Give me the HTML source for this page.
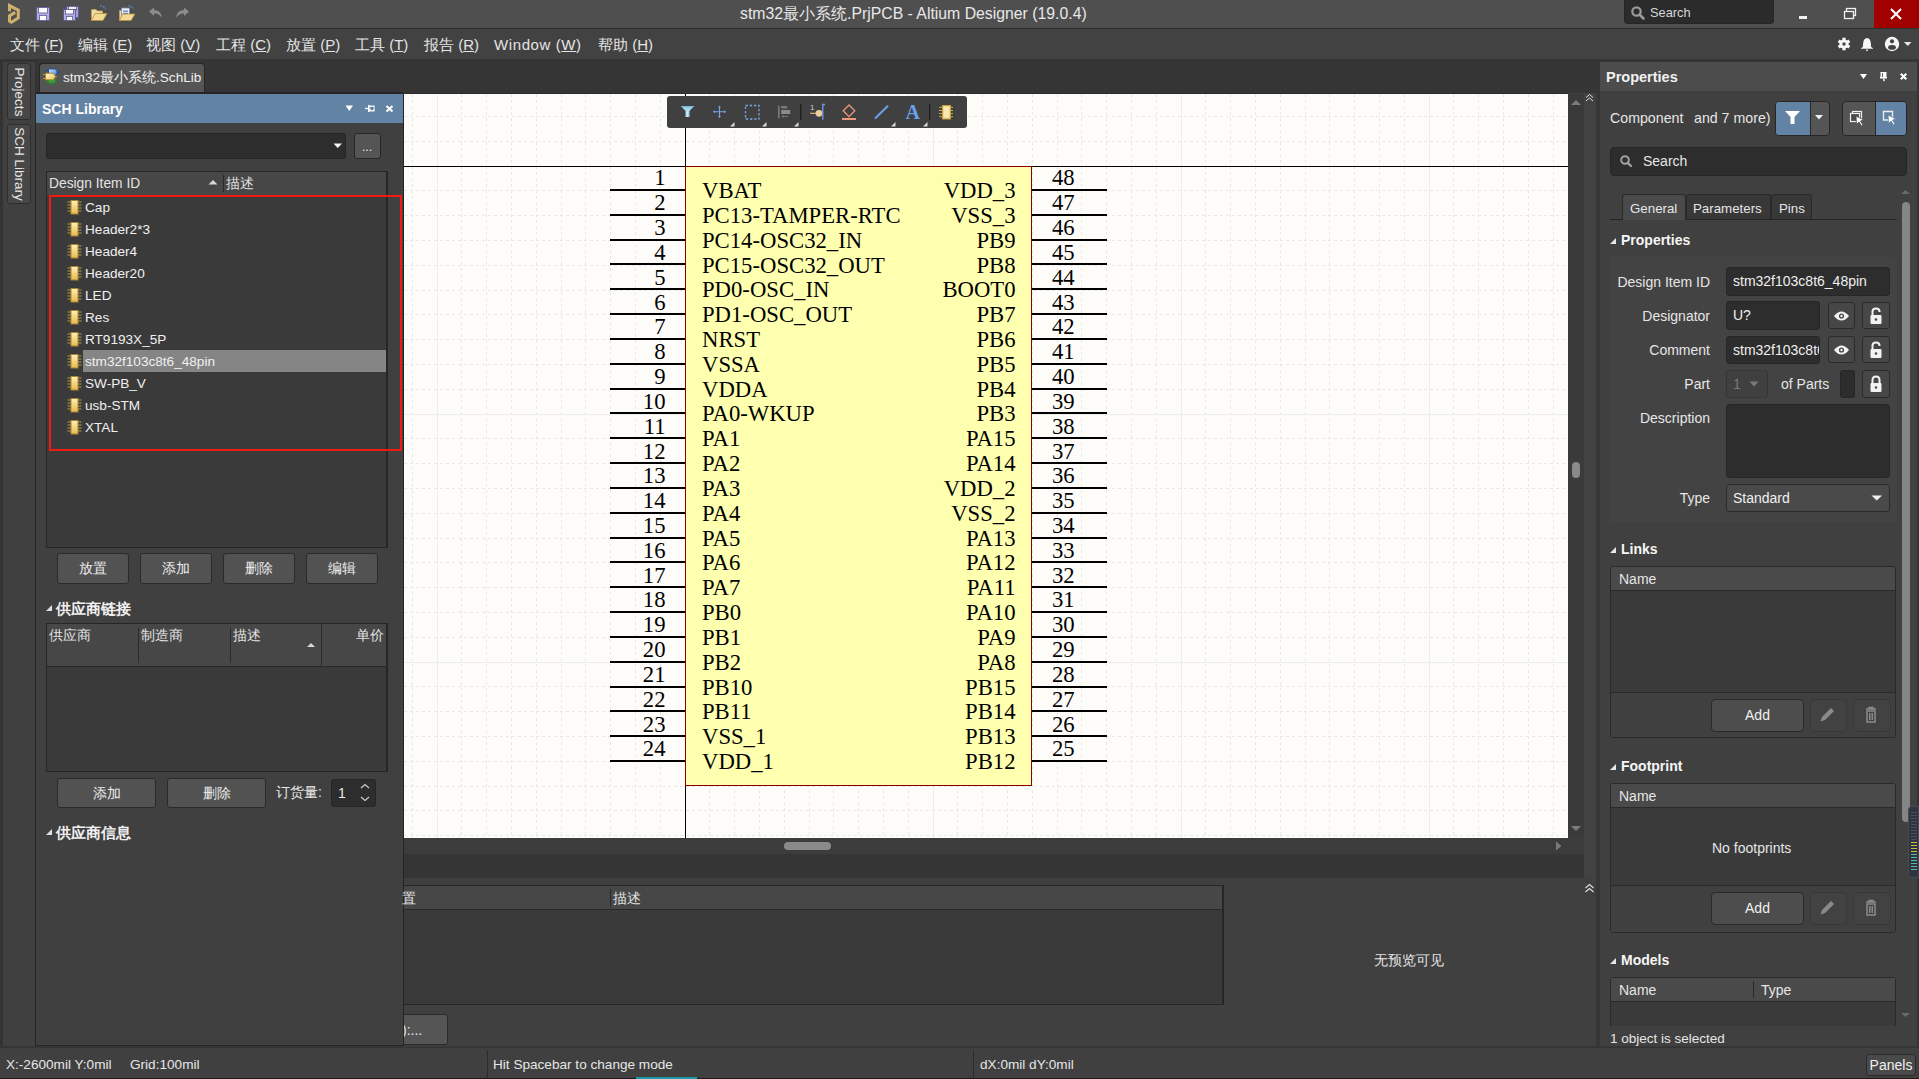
<!DOCTYPE html><html><head><meta charset="utf-8"><title>Altium</title><style>
*{margin:0;padding:0;box-sizing:border-box}
html,body{width:1919px;height:1079px;overflow:hidden;background:#333333;font-family:"Liberation Sans",sans-serif;color:#e6e6e6}
.a{position:absolute}
.t{position:absolute;white-space:nowrap;line-height:1}
.sv{position:absolute;overflow:visible}
</style></head><body>
<div style="position:absolute;left:0px;top:0px;width:1919px;height:28px;background:#4f4f4f"></div>
<div style="position:absolute;left:0px;top:28px;width:1919px;height:1px;background:#2e2e2e"></div>
<svg class="sv" style="left:0;top:0" width="200" height="28"><polyline points="9.5,11.2 9.5,5.6 18.3,10.2 18.3,17.9 11.4,22.3 9.5,21.1 9.5,15.9 15.2,12.4" stroke="#cdb06a" stroke-width="3" fill="none" stroke-linejoin="miter"/><rect x="36.5" y="7.5" width="13" height="13" fill="#b4aee8" stroke="#5c5c94" stroke-width="1"/><rect x="38.5" y="7.5" width="9" height="5.5" fill="#fafafa" stroke="#5c5c94" stroke-width="0.8"/><rect x="39.5" y="15.5" width="7" height="5" fill="#fafafa" stroke="#5c5c94" stroke-width="0.8"/><rect x="66.5" y="6.5" width="12" height="11" fill="#a8a2e0" stroke="#5c5c94" stroke-width="1"/><rect x="68.5" y="6.5" width="8" height="3.5" fill="#f2f2f2" stroke="#5c5c94" stroke-width="0.8"/><rect x="63.5" y="9.5" width="12" height="11" fill="#b4aee8" stroke="#5c5c94" stroke-width="1"/><rect x="65.5" y="9.5" width="8" height="4.5" fill="#fafafa" stroke="#5c5c94" stroke-width="0.8"/><rect x="66.5" y="16.5" width="6" height="4" fill="#fafafa" stroke="#5c5c94" stroke-width="0.8"/><path d="M91.5 9.5 L96 9.5 L97.5 11 L102.5 11 L102.5 13.5 L91.5 20.5 Z" fill="#f0dca8" stroke="#c0a050" stroke-width="0.8"/><path d="M95 13.5 L107 13.5 L103 20.5 L91.5 20.5 Z" fill="#f3d996" stroke="#b89038" stroke-width="0.8"/><path d="M100 6 Q104 5.5 105.5 9.5" stroke="#5a8ec8" stroke-width="1.1" stroke-dasharray="2 1" fill="none"/><path d="M119.5 10.5 L122 10.5 L122 20.5 L119.5 20.5 Z" fill="#f0dca8" stroke="#c0a050" stroke-width="0.8"/><rect x="121.5" y="8" width="8" height="10" fill="#eef2f8" stroke="#6a88b8" stroke-width="0.8"/><rect x="123" y="10.5" width="5" height="1.2" fill="#5a7ab0"/><rect x="123" y="12.8" width="5" height="1.2" fill="#5a7ab0"/><path d="M122.5 14 L135 14 L131 20.5 L119.5 20.5 Z" fill="#f3d996" stroke="#b89038" stroke-width="0.8"/><path d="M128.5 6 Q132 5.5 133.5 9.5" stroke="#5a8ec8" stroke-width="1.1" stroke-dasharray="2 1" fill="none"/><path d="M149 11.5 L154 7.5 L154 10 Q161 10 162 18 Q159 13 154 13.5 L154 16 Z" fill="#8c8c8c"/><path d="M189 11.5 L184 7.5 L184 10 Q177 10 176 18 Q179 13 184 13.5 L184 16 Z" fill="#8c8c8c"/></svg>
<div class="t" style="left:740px;top:4px;font-size:15.8px;color:#e8e8e8;line-height:20px">stm32最小系统.PrjPCB - Altium Designer (19.0.4)</div>
<div style="position:absolute;left:1624px;top:0px;width:150px;height:24px;background:#2b2b2b;border-radius:0 0 4px 4px;border:1px solid #262626;border-top:none"></div>
<svg class="sv" style="left:1630;top:5px" width="16" height="16"><circle cx="6.5" cy="6.5" r="4.2" stroke="#9a9a9a" stroke-width="2.2" fill="none"/><path d="M9.5 9.5 L13.5 13.5" stroke="#9a9a9a" stroke-width="2.6" stroke-linecap="round"/></svg>
<div class="t" style="left:1650px;top:5px;font-size:12.8px;color:#d8d8d8;line-height:16px">Search</div>
<div style="position:absolute;left:1799px;top:16px;width:8px;height:3px;background:#f0f0f0"></div>
<svg class="sv" style="left:1842px;top:6px" width="16" height="16"><rect x="4.5" y="2.5" width="9" height="7" stroke="#f0f0f0" stroke-width="1.3" fill="none"/><rect x="2.5" y="5.5" width="9" height="7" stroke="#f0f0f0" stroke-width="1.3" fill="#4f4f4f"/></svg>
<div style="position:absolute;left:1874px;top:0px;width:45px;height:28px;background:#a00000"></div>
<svg class="sv" style="left:1889px;top:7px" width="14" height="14"><path d="M2 2 L12 12 M12 2 L2 12" stroke="#fff" stroke-width="2"/></svg>
<div style="position:absolute;left:0px;top:29px;width:1919px;height:30px;background:#424242"></div>
<div class="t" style="left:10px;top:35px;font-size:15px;color:#e4e4e4;line-height:19px;">文件 (<u>F</u>)</div>
<div class="t" style="left:78px;top:35px;font-size:15px;color:#e4e4e4;line-height:19px;">编辑 (<u>E</u>)</div>
<div class="t" style="left:146px;top:35px;font-size:15px;color:#e4e4e4;line-height:19px;">视图 (<u>V</u>)</div>
<div class="t" style="left:216px;top:35px;font-size:15px;color:#e4e4e4;line-height:19px;">工程 (<u>C</u>)</div>
<div class="t" style="left:286px;top:35px;font-size:15px;color:#e4e4e4;line-height:19px;">放置 (<u>P</u>)</div>
<div class="t" style="left:355px;top:35px;font-size:15px;color:#e4e4e4;line-height:19px;">工具 (<u>T</u>)</div>
<div class="t" style="left:424px;top:35px;font-size:15px;color:#e4e4e4;line-height:19px;">报告 (<u>R</u>)</div>
<div class="t" style="left:494px;top:35px;font-size:15px;color:#e4e4e4;line-height:19px;letter-spacing:0.6px;">Window (<u>W</u>)</div>
<div class="t" style="left:598px;top:35px;font-size:15px;color:#e4e4e4;line-height:19px;">帮助 (<u>H</u>)</div>
<svg class="sv" style="left:1832px;top:34px" width="87" height="22"><g transform="translate(12,10)" fill="#f6f6f6"><circle r="4.6"/><rect x="-1.6" y="-6.3" width="3.2" height="3" transform="rotate(0)"/><rect x="-1.6" y="-6.3" width="3.2" height="3" transform="rotate(60)"/><rect x="-1.6" y="-6.3" width="3.2" height="3" transform="rotate(120)"/><rect x="-1.6" y="-6.3" width="3.2" height="3" transform="rotate(180)"/><rect x="-1.6" y="-6.3" width="3.2" height="3" transform="rotate(240)"/><rect x="-1.6" y="-6.3" width="3.2" height="3" transform="rotate(300)"/><circle r="1.7" fill="#424242"/></g><path d="M35 4 Q38.5 4.3 38.8 9 L39.2 13 L41 14.2 V14.8 H29 V14.2 L30.8 13 L31.2 9 Q31.5 4.3 35 4 Z" fill="#f6f6f6"/><rect x="34" y="15.6" width="2" height="1.2" fill="#f6f6f6"/><circle cx="60" cy="10" r="7.2" fill="#f6f6f6"/><circle cx="60" cy="7.3" r="2.1" fill="#424242"/><ellipse cx="60" cy="13.4" rx="3.9" ry="2.3" fill="#424242"/><path d="M72 8 L79.5 8 L75.75 12 Z" fill="#e8e8e8"/></svg>
<div style="position:absolute;left:0px;top:59px;width:1919px;height:35px;background:#353535"></div>
<div style="position:absolute;left:404px;top:94px;width:1164px;height:744px;background:#fefcf8;overflow:hidden"></div>
<svg class="sv" style="left:404px;top:94px" width="1164" height="744" viewBox="404 94 1164 744" shape-rendering="crispEdges"><line x1="412.5" y1="94" x2="412.5" y2="838" stroke="#e8e8e4" stroke-width="1" stroke-dasharray="2.5 3.5"/><line x1="437.5" y1="94" x2="437.5" y2="838" stroke="#eceee8" stroke-width="1"/><line x1="461.5" y1="94" x2="461.5" y2="838" stroke="#e8e8e4" stroke-width="1" stroke-dasharray="2.5 3.5"/><line x1="486.5" y1="94" x2="486.5" y2="838" stroke="#e8e8e4" stroke-width="1" stroke-dasharray="2.5 3.5"/><line x1="511.5" y1="94" x2="511.5" y2="838" stroke="#e8e8e4" stroke-width="1" stroke-dasharray="2.5 3.5"/><line x1="536.5" y1="94" x2="536.5" y2="838" stroke="#e8e8e4" stroke-width="1" stroke-dasharray="2.5 3.5"/><line x1="561.5" y1="94" x2="561.5" y2="838" stroke="#e8e8e4" stroke-width="1" stroke-dasharray="2.5 3.5"/><line x1="585.5" y1="94" x2="585.5" y2="838" stroke="#e8e8e4" stroke-width="1" stroke-dasharray="2.5 3.5"/><line x1="610.5" y1="94" x2="610.5" y2="838" stroke="#e8e8e4" stroke-width="1" stroke-dasharray="2.5 3.5"/><line x1="635.5" y1="94" x2="635.5" y2="838" stroke="#e8e8e4" stroke-width="1" stroke-dasharray="2.5 3.5"/><line x1="660.5" y1="94" x2="660.5" y2="838" stroke="#e8e8e4" stroke-width="1" stroke-dasharray="2.5 3.5"/><line x1="709.5" y1="94" x2="709.5" y2="838" stroke="#e8e8e4" stroke-width="1" stroke-dasharray="2.5 3.5"/><line x1="734.5" y1="94" x2="734.5" y2="838" stroke="#e8e8e4" stroke-width="1" stroke-dasharray="2.5 3.5"/><line x1="759.5" y1="94" x2="759.5" y2="838" stroke="#e8e8e4" stroke-width="1" stroke-dasharray="2.5 3.5"/><line x1="784.5" y1="94" x2="784.5" y2="838" stroke="#e8e8e4" stroke-width="1" stroke-dasharray="2.5 3.5"/><line x1="809.5" y1="94" x2="809.5" y2="838" stroke="#e8e8e4" stroke-width="1" stroke-dasharray="2.5 3.5"/><line x1="833.5" y1="94" x2="833.5" y2="838" stroke="#e8e8e4" stroke-width="1" stroke-dasharray="2.5 3.5"/><line x1="858.5" y1="94" x2="858.5" y2="838" stroke="#e8e8e4" stroke-width="1" stroke-dasharray="2.5 3.5"/><line x1="883.5" y1="94" x2="883.5" y2="838" stroke="#e8e8e4" stroke-width="1" stroke-dasharray="2.5 3.5"/><line x1="908.5" y1="94" x2="908.5" y2="838" stroke="#e8e8e4" stroke-width="1" stroke-dasharray="2.5 3.5"/><line x1="933.5" y1="94" x2="933.5" y2="838" stroke="#eceee8" stroke-width="1"/><line x1="957.5" y1="94" x2="957.5" y2="838" stroke="#e8e8e4" stroke-width="1" stroke-dasharray="2.5 3.5"/><line x1="982.5" y1="94" x2="982.5" y2="838" stroke="#e8e8e4" stroke-width="1" stroke-dasharray="2.5 3.5"/><line x1="1007.5" y1="94" x2="1007.5" y2="838" stroke="#e8e8e4" stroke-width="1" stroke-dasharray="2.5 3.5"/><line x1="1032.5" y1="94" x2="1032.5" y2="838" stroke="#e8e8e4" stroke-width="1" stroke-dasharray="2.5 3.5"/><line x1="1057.5" y1="94" x2="1057.5" y2="838" stroke="#e8e8e4" stroke-width="1" stroke-dasharray="2.5 3.5"/><line x1="1081.5" y1="94" x2="1081.5" y2="838" stroke="#e8e8e4" stroke-width="1" stroke-dasharray="2.5 3.5"/><line x1="1106.5" y1="94" x2="1106.5" y2="838" stroke="#e8e8e4" stroke-width="1" stroke-dasharray="2.5 3.5"/><line x1="1131.5" y1="94" x2="1131.5" y2="838" stroke="#e8e8e4" stroke-width="1" stroke-dasharray="2.5 3.5"/><line x1="1156.5" y1="94" x2="1156.5" y2="838" stroke="#e8e8e4" stroke-width="1" stroke-dasharray="2.5 3.5"/><line x1="1181.5" y1="94" x2="1181.5" y2="838" stroke="#eceee8" stroke-width="1"/><line x1="1205.5" y1="94" x2="1205.5" y2="838" stroke="#e8e8e4" stroke-width="1" stroke-dasharray="2.5 3.5"/><line x1="1230.5" y1="94" x2="1230.5" y2="838" stroke="#e8e8e4" stroke-width="1" stroke-dasharray="2.5 3.5"/><line x1="1255.5" y1="94" x2="1255.5" y2="838" stroke="#e8e8e4" stroke-width="1" stroke-dasharray="2.5 3.5"/><line x1="1280.5" y1="94" x2="1280.5" y2="838" stroke="#e8e8e4" stroke-width="1" stroke-dasharray="2.5 3.5"/><line x1="1305.5" y1="94" x2="1305.5" y2="838" stroke="#e8e8e4" stroke-width="1" stroke-dasharray="2.5 3.5"/><line x1="1329.5" y1="94" x2="1329.5" y2="838" stroke="#e8e8e4" stroke-width="1" stroke-dasharray="2.5 3.5"/><line x1="1354.5" y1="94" x2="1354.5" y2="838" stroke="#e8e8e4" stroke-width="1" stroke-dasharray="2.5 3.5"/><line x1="1379.5" y1="94" x2="1379.5" y2="838" stroke="#e8e8e4" stroke-width="1" stroke-dasharray="2.5 3.5"/><line x1="1404.5" y1="94" x2="1404.5" y2="838" stroke="#e8e8e4" stroke-width="1" stroke-dasharray="2.5 3.5"/><line x1="1429.5" y1="94" x2="1429.5" y2="838" stroke="#eceee8" stroke-width="1"/><line x1="1453.5" y1="94" x2="1453.5" y2="838" stroke="#e8e8e4" stroke-width="1" stroke-dasharray="2.5 3.5"/><line x1="1478.5" y1="94" x2="1478.5" y2="838" stroke="#e8e8e4" stroke-width="1" stroke-dasharray="2.5 3.5"/><line x1="1503.5" y1="94" x2="1503.5" y2="838" stroke="#e8e8e4" stroke-width="1" stroke-dasharray="2.5 3.5"/><line x1="1528.5" y1="94" x2="1528.5" y2="838" stroke="#e8e8e4" stroke-width="1" stroke-dasharray="2.5 3.5"/><line x1="1553.5" y1="94" x2="1553.5" y2="838" stroke="#e8e8e4" stroke-width="1" stroke-dasharray="2.5 3.5"/><line x1="404" y1="116.5" x2="1568" y2="116.5" stroke="#e8e8e4" stroke-width="1" stroke-dasharray="2.5 3.5"/><line x1="404" y1="141.5" x2="1568" y2="141.5" stroke="#e8e8e4" stroke-width="1" stroke-dasharray="2.5 3.5"/><line x1="404" y1="190.5" x2="1568" y2="190.5" stroke="#e8e8e4" stroke-width="1" stroke-dasharray="2.5 3.5"/><line x1="404" y1="215.5" x2="1568" y2="215.5" stroke="#e8e8e4" stroke-width="1" stroke-dasharray="2.5 3.5"/><line x1="404" y1="240.5" x2="1568" y2="240.5" stroke="#e8e8e4" stroke-width="1" stroke-dasharray="2.5 3.5"/><line x1="404" y1="265.5" x2="1568" y2="265.5" stroke="#e8e8e4" stroke-width="1" stroke-dasharray="2.5 3.5"/><line x1="404" y1="290.5" x2="1568" y2="290.5" stroke="#e8e8e4" stroke-width="1" stroke-dasharray="2.5 3.5"/><line x1="404" y1="314.5" x2="1568" y2="314.5" stroke="#e8e8e4" stroke-width="1" stroke-dasharray="2.5 3.5"/><line x1="404" y1="339.5" x2="1568" y2="339.5" stroke="#e8e8e4" stroke-width="1" stroke-dasharray="2.5 3.5"/><line x1="404" y1="364.5" x2="1568" y2="364.5" stroke="#e8e8e4" stroke-width="1" stroke-dasharray="2.5 3.5"/><line x1="404" y1="389.5" x2="1568" y2="389.5" stroke="#e8e8e4" stroke-width="1" stroke-dasharray="2.5 3.5"/><line x1="404" y1="414.5" x2="1568" y2="414.5" stroke="#eceee8" stroke-width="1"/><line x1="404" y1="438.5" x2="1568" y2="438.5" stroke="#e8e8e4" stroke-width="1" stroke-dasharray="2.5 3.5"/><line x1="404" y1="463.5" x2="1568" y2="463.5" stroke="#e8e8e4" stroke-width="1" stroke-dasharray="2.5 3.5"/><line x1="404" y1="488.5" x2="1568" y2="488.5" stroke="#e8e8e4" stroke-width="1" stroke-dasharray="2.5 3.5"/><line x1="404" y1="513.5" x2="1568" y2="513.5" stroke="#e8e8e4" stroke-width="1" stroke-dasharray="2.5 3.5"/><line x1="404" y1="538.5" x2="1568" y2="538.5" stroke="#e8e8e4" stroke-width="1" stroke-dasharray="2.5 3.5"/><line x1="404" y1="562.5" x2="1568" y2="562.5" stroke="#e8e8e4" stroke-width="1" stroke-dasharray="2.5 3.5"/><line x1="404" y1="587.5" x2="1568" y2="587.5" stroke="#e8e8e4" stroke-width="1" stroke-dasharray="2.5 3.5"/><line x1="404" y1="612.5" x2="1568" y2="612.5" stroke="#e8e8e4" stroke-width="1" stroke-dasharray="2.5 3.5"/><line x1="404" y1="637.5" x2="1568" y2="637.5" stroke="#e8e8e4" stroke-width="1" stroke-dasharray="2.5 3.5"/><line x1="404" y1="662.5" x2="1568" y2="662.5" stroke="#eceee8" stroke-width="1"/><line x1="404" y1="686.5" x2="1568" y2="686.5" stroke="#e8e8e4" stroke-width="1" stroke-dasharray="2.5 3.5"/><line x1="404" y1="711.5" x2="1568" y2="711.5" stroke="#e8e8e4" stroke-width="1" stroke-dasharray="2.5 3.5"/><line x1="404" y1="736.5" x2="1568" y2="736.5" stroke="#e8e8e4" stroke-width="1" stroke-dasharray="2.5 3.5"/><line x1="404" y1="761.5" x2="1568" y2="761.5" stroke="#e8e8e4" stroke-width="1" stroke-dasharray="2.5 3.5"/><line x1="404" y1="786.5" x2="1568" y2="786.5" stroke="#e8e8e4" stroke-width="1" stroke-dasharray="2.5 3.5"/><line x1="404" y1="810.5" x2="1568" y2="810.5" stroke="#e8e8e4" stroke-width="1" stroke-dasharray="2.5 3.5"/><line x1="404" y1="835.5" x2="1568" y2="835.5" stroke="#e8e8e4" stroke-width="1" stroke-dasharray="2.5 3.5"/><line x1="404" y1="166.5" x2="1568" y2="166.5" stroke="#000" stroke-width="1"/><line x1="685.5" y1="94" x2="685.5" y2="838" stroke="#000" stroke-width="1"/><rect x="685.5" y="166.5" width="346" height="619" fill="#ffffb0" stroke="#880000" stroke-width="1"/><rect x="610" y="189" width="75" height="2" fill="#000"/><rect x="1032" y="189" width="75" height="2" fill="#000"/><rect x="610" y="214" width="75" height="2" fill="#000"/><rect x="1032" y="214" width="75" height="2" fill="#000"/><rect x="610" y="239" width="75" height="2" fill="#000"/><rect x="1032" y="239" width="75" height="2" fill="#000"/><rect x="610" y="263" width="75" height="2" fill="#000"/><rect x="1032" y="263" width="75" height="2" fill="#000"/><rect x="610" y="288" width="75" height="2" fill="#000"/><rect x="1032" y="288" width="75" height="2" fill="#000"/><rect x="610" y="313" width="75" height="2" fill="#000"/><rect x="1032" y="313" width="75" height="2" fill="#000"/><rect x="610" y="338" width="75" height="2" fill="#000"/><rect x="1032" y="338" width="75" height="2" fill="#000"/><rect x="610" y="363" width="75" height="2" fill="#000"/><rect x="1032" y="363" width="75" height="2" fill="#000"/><rect x="610" y="388" width="75" height="2" fill="#000"/><rect x="1032" y="388" width="75" height="2" fill="#000"/><rect x="610" y="412" width="75" height="2" fill="#000"/><rect x="1032" y="412" width="75" height="2" fill="#000"/><rect x="610" y="437" width="75" height="2" fill="#000"/><rect x="1032" y="437" width="75" height="2" fill="#000"/><rect x="610" y="462" width="75" height="2" fill="#000"/><rect x="1032" y="462" width="75" height="2" fill="#000"/><rect x="610" y="487" width="75" height="2" fill="#000"/><rect x="1032" y="487" width="75" height="2" fill="#000"/><rect x="610" y="512" width="75" height="2" fill="#000"/><rect x="1032" y="512" width="75" height="2" fill="#000"/><rect x="610" y="537" width="75" height="2" fill="#000"/><rect x="1032" y="537" width="75" height="2" fill="#000"/><rect x="610" y="561" width="75" height="2" fill="#000"/><rect x="1032" y="561" width="75" height="2" fill="#000"/><rect x="610" y="586" width="75" height="2" fill="#000"/><rect x="1032" y="586" width="75" height="2" fill="#000"/><rect x="610" y="611" width="75" height="2" fill="#000"/><rect x="1032" y="611" width="75" height="2" fill="#000"/><rect x="610" y="636" width="75" height="2" fill="#000"/><rect x="1032" y="636" width="75" height="2" fill="#000"/><rect x="610" y="661" width="75" height="2" fill="#000"/><rect x="1032" y="661" width="75" height="2" fill="#000"/><rect x="610" y="686" width="75" height="2" fill="#000"/><rect x="1032" y="686" width="75" height="2" fill="#000"/><rect x="610" y="710" width="75" height="2" fill="#000"/><rect x="1032" y="710" width="75" height="2" fill="#000"/><rect x="610" y="735" width="75" height="2" fill="#000"/><rect x="1032" y="735" width="75" height="2" fill="#000"/><rect x="610" y="760" width="75" height="2" fill="#000"/><rect x="1032" y="760" width="75" height="2" fill="#000"/></svg>
<svg class="sv" style="left:0;top:0" width="1919" height="1079" font-family="Liberation Serif" font-size="22.7" fill="#000"><text x="665.5" y="185.4" text-anchor="end">1</text><text x="1052" y="185.4">48</text><text x="702" y="198.0">VBAT</text><text x="1015.5" y="198.0" text-anchor="end">VDD_3</text><text x="665.5" y="210.2" text-anchor="end">2</text><text x="1052" y="210.2">47</text><text x="702" y="222.8">PC13-TAMPER-RTC</text><text x="1015.5" y="222.8" text-anchor="end">VSS_3</text><text x="665.5" y="235.1" text-anchor="end">3</text><text x="1052" y="235.1">46</text><text x="702" y="247.7">PC14-OSC32_IN</text><text x="1015.5" y="247.7" text-anchor="end">PB9</text><text x="665.5" y="259.9" text-anchor="end">4</text><text x="1052" y="259.9">45</text><text x="702" y="272.5">PC15-OSC32_OUT</text><text x="1015.5" y="272.5" text-anchor="end">PB8</text><text x="665.5" y="284.7" text-anchor="end">5</text><text x="1052" y="284.7">44</text><text x="702" y="297.3">PD0-OSC_IN</text><text x="1015.5" y="297.3" text-anchor="end">BOOT0</text><text x="665.5" y="309.5" text-anchor="end">6</text><text x="1052" y="309.5">43</text><text x="702" y="322.1">PD1-OSC_OUT</text><text x="1015.5" y="322.1" text-anchor="end">PB7</text><text x="665.5" y="334.4" text-anchor="end">7</text><text x="1052" y="334.4">42</text><text x="702" y="347.0">NRST</text><text x="1015.5" y="347.0" text-anchor="end">PB6</text><text x="665.5" y="359.2" text-anchor="end">8</text><text x="1052" y="359.2">41</text><text x="702" y="371.8">VSSA</text><text x="1015.5" y="371.8" text-anchor="end">PB5</text><text x="665.5" y="384.0" text-anchor="end">9</text><text x="1052" y="384.0">40</text><text x="702" y="396.6">VDDA</text><text x="1015.5" y="396.6" text-anchor="end">PB4</text><text x="665.5" y="408.8" text-anchor="end">10</text><text x="1052" y="408.8">39</text><text x="702" y="421.4">PA0-WKUP</text><text x="1015.5" y="421.4" text-anchor="end">PB3</text><text x="665.5" y="433.7" text-anchor="end">11</text><text x="1052" y="433.7">38</text><text x="702" y="446.3">PA1</text><text x="1015.5" y="446.3" text-anchor="end">PA15</text><text x="665.5" y="458.5" text-anchor="end">12</text><text x="1052" y="458.5">37</text><text x="702" y="471.1">PA2</text><text x="1015.5" y="471.1" text-anchor="end">PA14</text><text x="665.5" y="483.3" text-anchor="end">13</text><text x="1052" y="483.3">36</text><text x="702" y="495.9">PA3</text><text x="1015.5" y="495.9" text-anchor="end">VDD_2</text><text x="665.5" y="508.1" text-anchor="end">14</text><text x="1052" y="508.1">35</text><text x="702" y="520.7">PA4</text><text x="1015.5" y="520.7" text-anchor="end">VSS_2</text><text x="665.5" y="533.0" text-anchor="end">15</text><text x="1052" y="533.0">34</text><text x="702" y="545.6">PA5</text><text x="1015.5" y="545.6" text-anchor="end">PA13</text><text x="665.5" y="557.8" text-anchor="end">16</text><text x="1052" y="557.8">33</text><text x="702" y="570.4">PA6</text><text x="1015.5" y="570.4" text-anchor="end">PA12</text><text x="665.5" y="582.6" text-anchor="end">17</text><text x="1052" y="582.6">32</text><text x="702" y="595.2">PA7</text><text x="1015.5" y="595.2" text-anchor="end">PA11</text><text x="665.5" y="607.4" text-anchor="end">18</text><text x="1052" y="607.4">31</text><text x="702" y="620.0">PB0</text><text x="1015.5" y="620.0" text-anchor="end">PA10</text><text x="665.5" y="632.3" text-anchor="end">19</text><text x="1052" y="632.3">30</text><text x="702" y="644.9">PB1</text><text x="1015.5" y="644.9" text-anchor="end">PA9</text><text x="665.5" y="657.1" text-anchor="end">20</text><text x="1052" y="657.1">29</text><text x="702" y="669.7">PB2</text><text x="1015.5" y="669.7" text-anchor="end">PA8</text><text x="665.5" y="681.9" text-anchor="end">21</text><text x="1052" y="681.9">28</text><text x="702" y="694.5">PB10</text><text x="1015.5" y="694.5" text-anchor="end">PB15</text><text x="665.5" y="706.7" text-anchor="end">22</text><text x="1052" y="706.7">27</text><text x="702" y="719.3">PB11</text><text x="1015.5" y="719.3" text-anchor="end">PB14</text><text x="665.5" y="731.6" text-anchor="end">23</text><text x="1052" y="731.6">26</text><text x="702" y="744.2">VSS_1</text><text x="1015.5" y="744.2" text-anchor="end">PB13</text><text x="665.5" y="756.4" text-anchor="end">24</text><text x="1052" y="756.4">25</text><text x="702" y="769.0">VDD_1</text><text x="1015.5" y="769.0" text-anchor="end">PB12</text></svg>
<div style="position:absolute;left:0px;top:60px;width:36px;height:987px;background:#333333"></div>
<div style="position:absolute;left:3px;top:62px;width:32px;height:984px;background:#404040"></div>
<div style="position:absolute;left:35px;top:94px;width:369px;height:952px;background:#404040;border-left:1px solid #262626;border-right:1px solid #232323;border-bottom:1px solid #262626"></div>
<div style="position:absolute;left:36px;top:94px;width:367px;height:29px;background:#6383a5"></div>
<div style="position:absolute;left:39px;top:63px;width:166px;height:29px;background:#555555;border:1px solid #262626;border-bottom:none;border-radius:4px 4px 0 0"></div>
<div style="position:absolute;left:36px;top:92px;width:367px;height:2px;background:#252525"></div>
<div style="position:absolute;left:404px;top:93px;width:1164px;height:1px;background:#2c2c2c"></div>
<svg class="sv" style="left:40px;top:64px" width="22" height="26"><defs><linearGradient id="bt" x1="0" y1="0" x2="1" y2="1"><stop offset="0" stop-color="#d8ecff"/><stop offset="1" stop-color="#3a78d8"/></linearGradient><linearGradient id="yt" x1="0" y1="0" x2="1" y2="1"><stop offset="0" stop-color="#fff6d0"/><stop offset="1" stop-color="#e8c060"/></linearGradient></defs><path d="M4.8 6.5 H8.5 M17 8.4 H19" stroke="#1a4aa0" stroke-width="1.1"/><path d="M8.5 5 H14.5 Q17.2 5 17.2 8.2 Q17.2 11.5 14.5 11.5 H8.5 Z" fill="url(#bt)" stroke="#1a4aa0" stroke-width="0.9"/><path d="M6 14.5 H17 M6 16.5 H17 M6 18.5 H17 M9.5 18.5 V21 M11.5 18.5 V21 M13.5 18.5 V21" stroke="#2a8a2a" stroke-width="0.9"/><rect x="8.5" y="14" width="6.5" height="4.8" fill="#3c9a3c"/><path d="M3 10.5 H5.5 M3 14.5 H5.5 M15.5 12.5 H16.8" stroke="#c0981c" stroke-width="1.1"/><path d="M5.5 9.3 H13.3 L15.6 12.5 L13.3 15.8 H5.5 Z" fill="url(#yt)" stroke="#b08818" stroke-width="0.9"/></svg>
<div class="t" style="left:63px;top:70px;font-size:13.6px;color:#f0f0f0;line-height:16px">stm32最小系统.SchLib</div>
<div style="position:absolute;left:7px;top:63px;width:24px;height:57px;background:#474747;border:1px solid #2e2e2e;border-radius:3px"></div>
<div style="position:absolute;left:7px;top:124px;width:24px;height:80px;background:#474747;border:1px solid #2e2e2e;border-radius:3px"></div>
<div class="t" style="left:19px;top:92px;transform:translate(-50%,-50%) rotate(90deg);font-size:13.5px;color:#e8e8e8;line-height:16px">Projects</div>
<div class="t" style="left:19px;top:164px;transform:translate(-50%,-50%) rotate(90deg);font-size:13.5px;color:#e8e8e8;line-height:16px">SCH Library</div>
<div class="t" style="left:42px;top:101px;font-size:14px;font-weight:bold;color:#ffffff;line-height:16px">SCH Library</div>
<svg class="sv" style="left:335px;top:95px" width="68" height="27"><path d="M10.5 10.5 L18 10.5 L14.25 16 Z" fill="#fff"/><path d="M30 13.5 H33.5" stroke="#fff" stroke-width="1.4"/><rect x="33" y="10" width="1.6" height="7" fill="#fff"/><rect x="35" y="11.2" width="4" height="4.6" stroke="#fff" stroke-width="1.3" fill="none"/><rect x="34.6" y="12.4" width="4.6" height="1.2" fill="#6383a5"/><path d="M51.5 11 L57.5 16.5 M57.5 11 L51.5 16.5" stroke="#fff" stroke-width="2"/></svg>
<div style="position:absolute;left:46px;top:133px;width:300px;height:26px;background:#2d2d2d;border:1px solid #262626;border-radius:3px"></div>
<svg class="sv" style="left:332px;top:141px" width="14" height="12"><path d="M1.5 2.5 L10 2.5 L5.75 7 Z" fill="#f6f6f6"/></svg>
<div style="position:absolute;left:354px;top:133px;width:27px;height:26px;background:#555555;border:1px solid #262626;border-radius:3px"></div>
<div class="t" style="left:362px;top:141px;font-size:12px;color:#f0f0f0;line-height:12px">...</div>
<div style="position:absolute;left:46px;top:171px;width:342px;height:377px;background:#3a3a3a;border:1px solid #262626;border-right:2px solid #262626"></div>
<div style="position:absolute;left:47px;top:172px;width:339px;height:23px;background:#474747"></div>
<div class="t" style="left:49px;top:176px;font-size:13.8px;color:#e2e2e2;line-height:16px">Design Item ID</div>
<svg class="sv" style="left:207px;top:178px" width="12" height="8"><path d="M1.5 6.5 L10.5 6.5 L6 2 Z" fill="#d8d8d8"/></svg>
<div style="position:absolute;left:223px;top:175px;width:1px;height:17px;background:#2a2a2a"></div>
<div class="t" style="left:226px;top:175px;font-size:14px;color:#e2e2e2;line-height:17px">描述</div>
<svg class="sv" style="left:67px;top:200px" width="16" height="16"><path d="M0.5 2 H4 M0.5 5 H4 M0.5 8 H4 M0.5 11 H4 M11 2 H14.5 M11 5 H14.5 M11 8 H14.5 M11 11 H14.5" stroke="#b89a40" stroke-width="1"/><defs><linearGradient id="g0" x1="0" y1="0" x2="0" y2="1"><stop offset="0" stop-color="#fff0b8"/><stop offset="1" stop-color="#e8b84c"/></linearGradient></defs><rect x="4" y="0.5" width="7" height="13.5" fill="url(#g0)" stroke="#a88838" stroke-width="1"/></svg>
<div class="t" style="left:85px;top:200px;font-size:13.6px;color:#f0f0f0;line-height:16px">Cap</div>
<svg class="sv" style="left:67px;top:222px" width="16" height="16"><path d="M0.5 2 H4 M0.5 5 H4 M0.5 8 H4 M0.5 11 H4 M11 2 H14.5 M11 5 H14.5 M11 8 H14.5 M11 11 H14.5" stroke="#b89a40" stroke-width="1"/><defs><linearGradient id="g1" x1="0" y1="0" x2="0" y2="1"><stop offset="0" stop-color="#fff0b8"/><stop offset="1" stop-color="#e8b84c"/></linearGradient></defs><rect x="4" y="0.5" width="7" height="13.5" fill="url(#g1)" stroke="#a88838" stroke-width="1"/></svg>
<div class="t" style="left:85px;top:222px;font-size:13.6px;color:#f0f0f0;line-height:16px">Header2*3</div>
<svg class="sv" style="left:67px;top:244px" width="16" height="16"><path d="M0.5 2 H4 M0.5 5 H4 M0.5 8 H4 M0.5 11 H4 M11 2 H14.5 M11 5 H14.5 M11 8 H14.5 M11 11 H14.5" stroke="#b89a40" stroke-width="1"/><defs><linearGradient id="g2" x1="0" y1="0" x2="0" y2="1"><stop offset="0" stop-color="#fff0b8"/><stop offset="1" stop-color="#e8b84c"/></linearGradient></defs><rect x="4" y="0.5" width="7" height="13.5" fill="url(#g2)" stroke="#a88838" stroke-width="1"/></svg>
<div class="t" style="left:85px;top:244px;font-size:13.6px;color:#f0f0f0;line-height:16px">Header4</div>
<svg class="sv" style="left:67px;top:266px" width="16" height="16"><path d="M0.5 2 H4 M0.5 5 H4 M0.5 8 H4 M0.5 11 H4 M11 2 H14.5 M11 5 H14.5 M11 8 H14.5 M11 11 H14.5" stroke="#b89a40" stroke-width="1"/><defs><linearGradient id="g3" x1="0" y1="0" x2="0" y2="1"><stop offset="0" stop-color="#fff0b8"/><stop offset="1" stop-color="#e8b84c"/></linearGradient></defs><rect x="4" y="0.5" width="7" height="13.5" fill="url(#g3)" stroke="#a88838" stroke-width="1"/></svg>
<div class="t" style="left:85px;top:266px;font-size:13.6px;color:#f0f0f0;line-height:16px">Header20</div>
<svg class="sv" style="left:67px;top:288px" width="16" height="16"><path d="M0.5 2 H4 M0.5 5 H4 M0.5 8 H4 M0.5 11 H4 M11 2 H14.5 M11 5 H14.5 M11 8 H14.5 M11 11 H14.5" stroke="#b89a40" stroke-width="1"/><defs><linearGradient id="g4" x1="0" y1="0" x2="0" y2="1"><stop offset="0" stop-color="#fff0b8"/><stop offset="1" stop-color="#e8b84c"/></linearGradient></defs><rect x="4" y="0.5" width="7" height="13.5" fill="url(#g4)" stroke="#a88838" stroke-width="1"/></svg>
<div class="t" style="left:85px;top:288px;font-size:13.6px;color:#f0f0f0;line-height:16px">LED</div>
<svg class="sv" style="left:67px;top:310px" width="16" height="16"><path d="M0.5 2 H4 M0.5 5 H4 M0.5 8 H4 M0.5 11 H4 M11 2 H14.5 M11 5 H14.5 M11 8 H14.5 M11 11 H14.5" stroke="#b89a40" stroke-width="1"/><defs><linearGradient id="g5" x1="0" y1="0" x2="0" y2="1"><stop offset="0" stop-color="#fff0b8"/><stop offset="1" stop-color="#e8b84c"/></linearGradient></defs><rect x="4" y="0.5" width="7" height="13.5" fill="url(#g5)" stroke="#a88838" stroke-width="1"/></svg>
<div class="t" style="left:85px;top:310px;font-size:13.6px;color:#f0f0f0;line-height:16px">Res</div>
<svg class="sv" style="left:67px;top:332px" width="16" height="16"><path d="M0.5 2 H4 M0.5 5 H4 M0.5 8 H4 M0.5 11 H4 M11 2 H14.5 M11 5 H14.5 M11 8 H14.5 M11 11 H14.5" stroke="#b89a40" stroke-width="1"/><defs><linearGradient id="g6" x1="0" y1="0" x2="0" y2="1"><stop offset="0" stop-color="#fff0b8"/><stop offset="1" stop-color="#e8b84c"/></linearGradient></defs><rect x="4" y="0.5" width="7" height="13.5" fill="url(#g6)" stroke="#a88838" stroke-width="1"/></svg>
<div class="t" style="left:85px;top:332px;font-size:13.6px;color:#f0f0f0;line-height:16px">RT9193X_5P</div>
<div style="position:absolute;left:83px;top:350px;width:303px;height:22px;background:#858585"></div>
<svg class="sv" style="left:67px;top:354px" width="16" height="16"><path d="M0.5 2 H4 M0.5 5 H4 M0.5 8 H4 M0.5 11 H4 M11 2 H14.5 M11 5 H14.5 M11 8 H14.5 M11 11 H14.5" stroke="#b89a40" stroke-width="1"/><defs><linearGradient id="g7" x1="0" y1="0" x2="0" y2="1"><stop offset="0" stop-color="#fff0b8"/><stop offset="1" stop-color="#e8b84c"/></linearGradient></defs><rect x="4" y="0.5" width="7" height="13.5" fill="url(#g7)" stroke="#a88838" stroke-width="1"/></svg>
<div class="t" style="left:85px;top:354px;font-size:13.6px;color:#f0f0f0;line-height:16px">stm32f103c8t6_48pin</div>
<svg class="sv" style="left:67px;top:376px" width="16" height="16"><path d="M0.5 2 H4 M0.5 5 H4 M0.5 8 H4 M0.5 11 H4 M11 2 H14.5 M11 5 H14.5 M11 8 H14.5 M11 11 H14.5" stroke="#b89a40" stroke-width="1"/><defs><linearGradient id="g8" x1="0" y1="0" x2="0" y2="1"><stop offset="0" stop-color="#fff0b8"/><stop offset="1" stop-color="#e8b84c"/></linearGradient></defs><rect x="4" y="0.5" width="7" height="13.5" fill="url(#g8)" stroke="#a88838" stroke-width="1"/></svg>
<div class="t" style="left:85px;top:376px;font-size:13.6px;color:#f0f0f0;line-height:16px">SW-PB_V</div>
<svg class="sv" style="left:67px;top:398px" width="16" height="16"><path d="M0.5 2 H4 M0.5 5 H4 M0.5 8 H4 M0.5 11 H4 M11 2 H14.5 M11 5 H14.5 M11 8 H14.5 M11 11 H14.5" stroke="#b89a40" stroke-width="1"/><defs><linearGradient id="g9" x1="0" y1="0" x2="0" y2="1"><stop offset="0" stop-color="#fff0b8"/><stop offset="1" stop-color="#e8b84c"/></linearGradient></defs><rect x="4" y="0.5" width="7" height="13.5" fill="url(#g9)" stroke="#a88838" stroke-width="1"/></svg>
<div class="t" style="left:85px;top:398px;font-size:13.6px;color:#f0f0f0;line-height:16px">usb-STM</div>
<svg class="sv" style="left:67px;top:420px" width="16" height="16"><path d="M0.5 2 H4 M0.5 5 H4 M0.5 8 H4 M0.5 11 H4 M11 2 H14.5 M11 5 H14.5 M11 8 H14.5 M11 11 H14.5" stroke="#b89a40" stroke-width="1"/><defs><linearGradient id="g10" x1="0" y1="0" x2="0" y2="1"><stop offset="0" stop-color="#fff0b8"/><stop offset="1" stop-color="#e8b84c"/></linearGradient></defs><rect x="4" y="0.5" width="7" height="13.5" fill="url(#g10)" stroke="#a88838" stroke-width="1"/></svg>
<div class="t" style="left:85px;top:420px;font-size:13.6px;color:#f0f0f0;line-height:16px">XTAL</div>
<div style="position:absolute;left:49px;top:195px;width:353px;height:256px;border:2px solid #f01a10"></div>
<div style="position:absolute;left:57px;top:553px;width:72px;height:31px;background:#525252;border:1px solid #2a2a2a;border-radius:3px;text-align:center;font-size:14px;line-height:29px;color:#ececec">放置</div>
<div style="position:absolute;left:140px;top:553px;width:72px;height:31px;background:#525252;border:1px solid #2a2a2a;border-radius:3px;text-align:center;font-size:14px;line-height:29px;color:#ececec">添加</div>
<div style="position:absolute;left:223px;top:553px;width:72px;height:31px;background:#525252;border:1px solid #2a2a2a;border-radius:3px;text-align:center;font-size:14px;line-height:29px;color:#ececec">删除</div>
<div style="position:absolute;left:306px;top:553px;width:72px;height:31px;background:#525252;border:1px solid #2a2a2a;border-radius:3px;text-align:center;font-size:14px;line-height:29px;color:#ececec">编辑</div>
<svg class="sv" style="left:45px;top:604px" width="8" height="8"><path d="M1 7 L7 7 L7 1 Z" fill="#e0e0e0"/></svg>
<div class="t" style="left:56px;top:601px;font-size:14.5px;font-weight:bold;color:#f0f0f0;line-height:16px">供应商链接</div>
<div style="position:absolute;left:46px;top:623px;width:342px;height:149px;background:#3a3a3a;border:1px solid #262626;border-right:2px solid #262626"></div>
<div style="position:absolute;left:47px;top:624px;width:339px;height:43px;background:#474747;border-bottom:1px solid #292929"></div>
<div class="t" style="left:49px;top:628px;font-size:13.5px;color:#e2e2e2;line-height:16px">供应商</div>
<div class="t" style="left:141px;top:628px;font-size:13.5px;color:#e2e2e2;line-height:16px">制造商</div>
<div class="t" style="left:233px;top:628px;font-size:13.5px;color:#e2e2e2;line-height:16px">描述</div>
<div class="t" style="left:356px;top:628px;font-size:13.5px;color:#e2e2e2;line-height:16px">单价</div>
<div style="position:absolute;left:138px;top:628px;width:1px;height:35px;background:#2a2a2a"></div>
<div style="position:absolute;left:230px;top:628px;width:1px;height:35px;background:#2a2a2a"></div>
<div style="position:absolute;left:321px;top:624px;width:1px;height:43px;background:#2a2a2a"></div>
<svg class="sv" style="left:306px;top:642px" width="10" height="6"><path d="M1 5 L9 5 L5 1 Z" fill="#d8d8d8"/></svg>
<div style="position:absolute;left:57px;top:778px;width:99px;height:30px;background:#525252;border:1px solid #2a2a2a;border-radius:3px;text-align:center;font-size:14px;line-height:28px;color:#ececec">添加</div>
<div style="position:absolute;left:167px;top:778px;width:99px;height:30px;background:#525252;border:1px solid #2a2a2a;border-radius:3px;text-align:center;font-size:14px;line-height:28px;color:#ececec">删除</div>
<div class="t" style="left:276px;top:784px;font-size:14px;color:#e8e8e8;line-height:17px">订货量:</div>
<div style="position:absolute;left:331px;top:779px;width:45px;height:28px;background:#2d2d2d;border:1px solid #262626;border-radius:3px"></div>
<div class="t" style="left:338px;top:785px;font-size:14px;color:#e8e8e8;line-height:16px">1</div>
<svg class="sv" style="left:359px;top:782px" width="12" height="22"><path d="M2 6 L6 2.5 L10 6 M2 15 L6 18.5 L10 15" stroke="#d0d0d0" stroke-width="1.1" fill="none"/></svg>
<svg class="sv" style="left:45px;top:828px" width="8" height="8"><path d="M1 7 L7 7 L7 1 Z" fill="#e0e0e0"/></svg>
<div class="t" style="left:56px;top:825px;font-size:14.5px;font-weight:bold;color:#f0f0f0;line-height:16px">供应商信息</div>
<div style="position:absolute;left:1568px;top:93px;width:16px;height:745px;background:#3a3a3a;border-top:1px solid #404040"></div>
<div style="position:absolute;left:1584px;top:93px;width:12px;height:785px;background:#424242"></div>
<div style="position:absolute;left:404px;top:838px;width:1180px;height:16px;background:#3c3c3c"></div>
<div style="position:absolute;left:404px;top:854px;width:1180px;height:25px;background:#353535"></div>
<div style="position:absolute;left:404px;top:878px;width:1192px;height:168px;background:#404040"></div>
<div style="position:absolute;left:1596px;top:60px;width:4px;height:987px;background:#363636"></div>
<div style="position:absolute;left:784px;top:842px;width:47px;height:8px;background:#8a8a8a;border-radius:4px"></div>
<svg class="sv" style="left:1554px;top:840px" width="10" height="12"><path d="M2 1.5 L7.5 6 L2 10.5 Z" fill="#7a7a7a"/></svg>
<div style="position:absolute;left:1572px;top:462px;width:8px;height:16px;background:#8a8a8a;border-radius:4px"></div>
<svg class="sv" style="left:1570px;top:97px" width="12" height="10"><path d="M1 8 L11 8 L6 3 Z" fill="#7a7a7a"/></svg>
<svg class="sv" style="left:1570px;top:824px" width="12" height="10"><path d="M1 2 L11 2 L6 7 Z" fill="#7a7a7a"/></svg>
<svg class="sv" style="left:1583px;top:92px" width="14" height="12"><path d="M3 5.5 L6.5 2.5 L10 5.5 M3 9 L6.5 6 L10 9" stroke="#e0e0e0" stroke-width="1" fill="none"/></svg>
<div style="position:absolute;left:404px;top:885px;width:820px;height:120px;background:#3a3a3a;border:1px solid #262626;border-right:2px solid #262626;border-left:none"></div>
<div style="position:absolute;left:404px;top:886px;width:818px;height:24px;background:#474747;border-bottom:1px solid #292929"></div>
<div class="t" style="left:402px;top:890px;font-size:14px;color:#e2e2e2;line-height:16px">置</div>
<div style="position:absolute;left:610px;top:889px;width:1px;height:18px;background:#2a2a2a"></div>
<div class="t" style="left:613px;top:890px;font-size:14px;color:#e2e2e2;line-height:16px">描述</div>
<div style="position:absolute;left:404px;top:1014px;width:44px;height:31px;overflow:hidden"><div style="position:absolute;left:-41px;top:0;width:85px;height:31px;background:#555555;border:1px solid #2a2a2a;border-radius:3px"></div><div class="t" style="left:-2px;top:8px;font-size:14px;color:#e8e8e8;line-height:16px">):...</div></div>
<div class="t" style="left:1374px;top:952px;font-size:14px;color:#e4e4e4;line-height:16px">无预览可见</div>
<svg class="sv" style="left:1583px;top:882px" width="14" height="12"><path d="M2.5 6 L6.5 2.5 L10.5 6 M2.5 10 L6.5 6.5 L10.5 10" stroke="#e0e0e0" stroke-width="1.1" fill="none"/></svg>
<div style="position:absolute;left:667px;top:96px;width:300px;height:32px;background:#404040;border-radius:3px"></div>
<svg class="sv" style="left:667px;top:96px" width="300" height="32"><path d="M14 10 H27 L22.5 15 V21 H18.5 V15 Z" fill="#a6d6ee"/><path d="M14 10 H27 L26 11.5 H15 Z" fill="#7ab8e0"/><rect x="19.5" y="15" width="1.2" height="6" fill="#d8eef8"/><path d="M52.5 10 V21.5 M46.5 15.75 H58.5" stroke="#7aa2e6" stroke-width="1.1"/><path d="M51 11.5 L52.5 9.5 L54 11.5 Z M51 20 L52.5 22 L54 20 Z M48 14.25 L46 15.75 L48 17.25 Z M57 14.25 L59 15.75 L57 17.25 Z" fill="#7aa2e6"/><rect x="78.5" y="9.5" width="13.5" height="13.5" stroke="#7aa2e6" stroke-width="1.3" stroke-dasharray="2.4 1.8" fill="none"/><rect x="111" y="9.8" width="1.6" height="12.5" fill="#7a7a7a"/><rect x="114.2" y="10" width="6" height="2.4" fill="#7a7a7a"/><rect x="114.2" y="14" width="9" height="4" fill="#8a8a8a"/><path d="M115 20.4 H121 M115 20.4 L116.5 19.2 M115 20.4 L116.5 21.6" stroke="#7a7a7a" stroke-width="1"/><rect x="133" y="8" width="1.3" height="16" fill="#1e1e1e"/><path d="M143 17.3 H149" stroke="#d8b878" stroke-width="1.2"/><circle cx="152" cy="17.3" r="3.4" fill="#e8d0a0"/><path d="M158 8.5 H155.8 V23.8" stroke="#6a9ce8" stroke-width="1.3" fill="none"/><text x="143" y="14" font-size="8" fill="#d0d0d0" font-family="Liberation Sans">1</text><path d="M182 9 L187.8 14.8 L182 20.6 L176.2 14.8 Z" stroke="#ee9a78" stroke-width="1.3" fill="none"/><rect x="175" y="22" width="14" height="2" fill="#ee9a78"/><path d="M208 22.5 L221 9.8" stroke="#6aa0ec" stroke-width="2"/><text x="238.5" y="23" font-size="20" font-weight="bold" fill="#6aa0ec" font-family="Liberation Serif">A</text><rect x="262" y="8" width="1.3" height="16" fill="#1e1e1e"/><path d="M272 11.3 H286 M272 14.5 H286 M272 17.6 H286 M272 20.7 H286" stroke="#c8a848" stroke-width="1"/><rect x="275.5" y="9.5" width="8" height="13.5" fill="#f2d88e" stroke="#c0a040" stroke-width="1"/><rect x="277" y="11" width="5" height="10.5" fill="#f8e6b0"/><path d="M67.5 26 L67.5 30.5 L63.0 30.5 Z" fill="#d8d8d8"/><path d="M99.5 26 L99.5 30.5 L95.0 30.5 Z" fill="#d8d8d8"/><path d="M131.5 26 L131.5 30.5 L127.0 30.5 Z" fill="#d8d8d8"/><path d="M228.5 26 L228.5 30.5 L224.0 30.5 Z" fill="#d8d8d8"/><path d="M260.5 26 L260.5 30.5 L256.0 30.5 Z" fill="#d8d8d8"/></svg>
<div style="position:absolute;left:1600px;top:62px;width:317px;height:985px;background:#404040"></div>
<div style="position:absolute;left:1600px;top:62px;width:317px;height:29px;background:#4c4c4c"></div>
<div class="t" style="left:1606px;top:69px;font-size:14.5px;font-weight:bold;color:#f2f2f2;line-height:17px">Properties</div>
<svg class="sv" style="left:1850px;top:65px" width="68" height="25"><path d="M10 9 L17 9 L13.5 14 Z" fill="#fff"/><rect x="30.5" y="7" width="6" height="5.2" fill="#fff"/><rect x="32" y="8" width="1" height="4" fill="#666"/><rect x="30" y="12" width="7" height="1.5" fill="#fff"/><rect x="33.2" y="13.5" width="1.4" height="2.7" fill="#fff"/><path d="M50.8 8.8 L56.3 14.3 M56.3 8.8 L50.8 14.3" stroke="#fff" stroke-width="2.1"/></svg>
<div class="t" style="left:1610px;top:110px;font-size:14.2px;color:#e6e6e6;line-height:16px;">Component</div>
<div class="t" style="left:1694px;top:110px;font-size:14.2px;color:#e6e6e6;line-height:16px;">and 7 more)</div>
<div style="position:absolute;left:1775px;top:101px;width:55px;height:35px;background:#555555;border:1px solid #262626;border-radius:4px;overflow:hidden"><div style="position:absolute;left:0;top:0;width:35px;height:33px;background:#6383a5;border-right:1px solid #262626"></div></div>
<svg class="sv" style="left:1782px;top:108px" width="46" height="20"><path d="M3 3 H18 L12.5 9 V16 H8.5 V9 Z" fill="#fff"/><path d="M33 7 L41 7 L37 11.5 Z" fill="#f0f0f0"/></svg>
<div style="position:absolute;left:1842px;top:101px;width:65px;height:35px;background:#555555;border:1px solid #262626;border-radius:4px;overflow:hidden"><div style="position:absolute;left:32px;top:0;width:33px;height:33px;background:#6383a5;border-left:1px solid #262626"></div></div>
<svg class="sv" style="left:1848px;top:107px" width="56" height="22"><rect x="4.5" y="4.5" width="9" height="8" stroke="#f0f0f0" stroke-width="1.2" fill="none"/><rect x="2.5" y="6.5" width="9" height="8" stroke="#f0f0f0" stroke-width="1.2" fill="#4a4a4a"/><path d="M8 9 L16 13 L12.5 14 L15 18 L13.5 19 L11 15 L8.5 17.5 Z" fill="#fff" stroke="#4a4a4a" stroke-width="0.8"/><path d="M44.5 13 V4.5 H35.5 V13 H40" stroke="#f0f0f0" stroke-width="1.3" fill="none"/><path d="M40 8 L48 12 L44.5 13 L47 17 L45.5 18 L43 14 L40.5 16.5 Z" fill="#fff" stroke="#6383a5" stroke-width="0.8"/></svg>
<div style="position:absolute;left:1610px;top:147px;width:297px;height:29px;background:#2d2d2d;border:1px solid #262626;border-radius:4px"></div>
<svg class="sv" style="left:1619px;top:154px" width="16" height="16"><circle cx="6" cy="6" r="3.8" stroke="#a0a0a0" stroke-width="2" fill="none"/><path d="M8.8 8.8 L12 12" stroke="#a0a0a0" stroke-width="2.4" stroke-linecap="round"/></svg>
<div class="t" style="left:1643px;top:153px;font-size:14px;color:#e6e6e6;line-height:16px;">Search</div>
<div style="position:absolute;left:1610px;top:219px;width:287px;height:1px;background:#262626"></div>
<div style="position:absolute;left:1622px;top:194px;width:64px;height:26px;background:#4a4a4a;border:1px solid #2a2a2a;border-bottom:none;border-radius:3px 3px 0 0"></div>
<div style="position:absolute;left:1686px;top:194px;width:85px;height:25px;background:#383838;border:1px solid #2a2a2a;border-bottom:none;border-radius:3px 3px 0 0"></div>
<div style="position:absolute;left:1771px;top:194px;width:41px;height:25px;background:#383838;border:1px solid #2a2a2a;border-bottom:none;border-radius:3px 3px 0 0"></div>
<div class="t" style="left:1630px;top:201px;font-size:13.3px;color:#e6e6e6;line-height:16px;">General</div>
<div class="t" style="left:1693px;top:201px;font-size:13.3px;color:#e6e6e6;line-height:16px;">Parameters</div>
<div class="t" style="left:1779px;top:201px;font-size:13.3px;color:#e6e6e6;line-height:16px;">Pins</div>
<svg class="sv" style="left:1899px;top:187px" width="14" height="10"><path d="M2 7 L11 7 L6.5 3 Z" fill="#6a6a6a"/></svg>
<div style="position:absolute;left:1902px;top:202px;width:8px;height:620px;background:#858585;border-radius:4px"></div>
<svg class="sv" style="left:1899px;top:1010px" width="14" height="10"><path d="M2 3 L11 3 L6.5 7 Z" fill="#6a6a6a"/></svg>
<svg class="sv" style="left:1609px;top:237px" width="8" height="8"><path d="M1 7 L7 7 L7 1 Z" fill="#e8e8e8"/></svg>
<div class="t" style="left:1621px;top:232px;font-size:14px;font-weight:bold;color:#f6f6f6;line-height:16px">Properties</div>
<div style="position:absolute;left:1610px;top:257px;width:287px;height:265px;background:#434343;border-radius:3px"></div>
<div class="t" style="left:1510px;top:274px;width:200px;text-align:right;font-size:14px;color:#e6e6e6;line-height:16px;">Design Item ID</div>
<div style="position:absolute;left:1726px;top:267px;width:164px;height:29px;background:#2d2d2d;border:1px solid #262626;border-radius:3px;font-size:14px;color:#f0f0f0;line-height:27px;padding-left:6px;overflow:hidden;white-space:nowrap">stm32f103c8t6_48pin</div>
<div class="t" style="left:1510px;top:308px;width:200px;text-align:right;font-size:14px;color:#e6e6e6;line-height:16px;">Designator</div>
<div style="position:absolute;left:1726px;top:301px;width:94px;height:29px;background:#2d2d2d;border:1px solid #262626;border-radius:3px;font-size:14px;color:#f0f0f0;line-height:27px;padding-left:6px;overflow:hidden;white-space:nowrap">U?</div>
<div class="t" style="left:1510px;top:342px;width:200px;text-align:right;font-size:14px;color:#e6e6e6;line-height:16px;">Comment</div>
<div style="position:absolute;left:1726px;top:336px;width:94px;height:28px;background:#2d2d2d;border:1px solid #262626;border-radius:3px;font-size:14px;color:#f0f0f0;line-height:26px;padding-left:6px;overflow:hidden;white-space:nowrap">stm32f103c8t6</div>
<div class="t" style="left:1510px;top:376px;width:200px;text-align:right;font-size:14px;color:#e6e6e6;line-height:16px;">Part</div>
<div style="position:absolute;left:1726px;top:370px;width:42px;height:28px;background:#404040;border:1px solid #353535;border-radius:3px;font-size:14px;color:#7a7a7a;line-height:26px;padding-left:6px;overflow:hidden;white-space:nowrap">1</div>
<svg class="sv" style="left:1748px;top:380px" width="12" height="8"><path d="M1.5 1.5 L10.5 1.5 L6 6.5 Z" fill="#7a7a7a"/></svg>
<div class="t" style="left:1781px;top:376px;font-size:14px;color:#e6e6e6;line-height:16px;">of Parts</div>
<div style="position:absolute;left:1840px;top:370px;width:15px;height:28px;background:#2d2d2d;border:1px solid #262626;border-radius:3px;font-size:14px;color:#f0f0f0;line-height:26px;padding-left:6px;overflow:hidden;white-space:nowrap"></div>
<div class="t" style="left:1510px;top:410px;width:200px;text-align:right;font-size:14px;color:#e6e6e6;line-height:16px;">Description</div>
<div style="position:absolute;left:1726px;top:404px;width:164px;height:74px;background:#2d2d2d;border:1px solid #262626;border-radius:3px;font-size:14px;color:#f0f0f0;line-height:72px;padding-left:6px;overflow:hidden;white-space:nowrap"></div>
<div class="t" style="left:1510px;top:490px;width:200px;text-align:right;font-size:14px;color:#e6e6e6;line-height:16px;">Type</div>
<div style="position:absolute;left:1726px;top:484px;width:164px;height:28px;background:#4a4a4a;border:1px solid #2a2a2a;border-radius:3px;font-size:14px;color:#f0f0f0;line-height:26px;padding-left:6px;overflow:hidden;white-space:nowrap">Standard</div>
<svg class="sv" style="left:1870px;top:494px" width="14" height="8"><path d="M1.5 1.5 L12 1.5 L6.75 6.5 Z" fill="#f0f0f0"/></svg>
<div style="position:absolute;left:1828px;top:302px;width:27px;height:27px;background:#474747;border:1px solid #2a2a2a;border-radius:3px"></div>
<svg class="sv" style="left:1828px;top:302px" width="27" height="27"><path d="M6 14 Q13.5 5 21 14 Q13.5 23 6 14 Z" fill="#f2f2f2"/><circle cx="13.5" cy="14" r="2.6" fill="#474747"/><circle cx="13.5" cy="14" r="1.2" fill="#f2f2f2"/></svg>
<div style="position:absolute;left:1862px;top:302px;width:28px;height:27px;background:#474747;border:1px solid #2a2a2a;border-radius:3px"></div>
<svg class="sv" style="left:1862px;top:302px" width="28" height="27"><rect x="8.5" y="13" width="11" height="9" rx="1" fill="#f2f2f2"/><path d="M10.5 13 V9.5 Q10.5 6.5 14 6.5 Q17.5 6.5 17.5 9.5 V10" stroke="#f2f2f2" stroke-width="2" fill="none"/><circle cx="14" cy="17.5" r="1.3" fill="#474747"/></svg>
<div style="position:absolute;left:1828px;top:336px;width:27px;height:27px;background:#474747;border:1px solid #2a2a2a;border-radius:3px"></div>
<svg class="sv" style="left:1828px;top:336px" width="27" height="27"><path d="M6 14 Q13.5 5 21 14 Q13.5 23 6 14 Z" fill="#f2f2f2"/><circle cx="13.5" cy="14" r="2.6" fill="#474747"/><circle cx="13.5" cy="14" r="1.2" fill="#f2f2f2"/></svg>
<div style="position:absolute;left:1862px;top:336px;width:28px;height:27px;background:#474747;border:1px solid #2a2a2a;border-radius:3px"></div>
<svg class="sv" style="left:1862px;top:336px" width="28" height="27"><rect x="8.5" y="13" width="11" height="9" rx="1" fill="#f2f2f2"/><path d="M10.5 13 V9.5 Q10.5 6.5 14 6.5 Q17.5 6.5 17.5 9.5 V10" stroke="#f2f2f2" stroke-width="2" fill="none"/><circle cx="14" cy="17.5" r="1.3" fill="#474747"/></svg>
<div style="position:absolute;left:1862px;top:370px;width:28px;height:28px;background:#474747;border:1px solid #2a2a2a;border-radius:3px"></div>
<svg class="sv" style="left:1862px;top:370px" width="28" height="28"><rect x="8.5" y="13" width="11" height="9" rx="1" fill="#f2f2f2"/><path d="M10.5 13 V10 Q10.5 6.5 14 6.5 Q17.5 6.5 17.5 10 V13" stroke="#f2f2f2" stroke-width="2" fill="none"/><circle cx="14" cy="17.5" r="1.3" fill="#474747"/></svg>
<svg class="sv" style="left:1609px;top:546px" width="8" height="8"><path d="M1 7 L7 7 L7 1 Z" fill="#e8e8e8"/></svg>
<div class="t" style="left:1621px;top:541px;font-size:14px;font-weight:bold;color:#f6f6f6;line-height:16px">Links</div>
<div style="position:absolute;left:1610px;top:566px;width:286px;height:172px;background:#3a3a3a;border:1px solid #2a2a2a;border-radius:3px"></div>
<div style="position:absolute;left:1611px;top:567px;width:284px;height:24px;background:#4a4a4a;border-bottom:1px solid #2a2a2a;border-radius:2px 2px 0 0"></div>
<div class="t" style="left:1619px;top:571px;font-size:14px;color:#e6e6e6;line-height:16px;">Name</div>
<div style="position:absolute;left:1611px;top:692px;width:284px;height:45px;background:#404040;border-top:1px solid #2a2a2a"></div>
<div style="position:absolute;left:1711px;top:699px;width:93px;height:33px;background:#4d4d4d;border:1px solid #2a2a2a;border-radius:4px;text-align:center;font-size:14px;line-height:31px;color:#f0f0f0">Add</div>
<div style="position:absolute;left:1810px;top:699px;width:37px;height:33px;background:#424242;border:1px solid #383838;border-radius:4px"></div>
<div style="position:absolute;left:1853px;top:699px;width:38px;height:33px;background:#424242;border:1px solid #383838;border-radius:4px"></div>
<svg class="sv" style="left:1810px;top:699px" width="81" height="33"><path d="M10.5 22.5 L12 18 L21 9 L24 12 L15 21 Z" fill="#8a8a8a"/><path d="M56 10 H66 M59 10 V8.5 H63 V10 M57 12 H65 V23 H57 Z" stroke="#8a8a8a" stroke-width="1.5" fill="none"/><path d="M59.5 14 V21 M61 14 V21 M62.5 14 V21" stroke="#8a8a8a" stroke-width="1"/></svg>
<svg class="sv" style="left:1609px;top:763px" width="8" height="8"><path d="M1 7 L7 7 L7 1 Z" fill="#e8e8e8"/></svg>
<div class="t" style="left:1621px;top:758px;font-size:14px;font-weight:bold;color:#f6f6f6;line-height:16px">Footprint</div>
<div style="position:absolute;left:1610px;top:783px;width:286px;height:150px;background:#3a3a3a;border:1px solid #2a2a2a;border-radius:3px"></div>
<div style="position:absolute;left:1611px;top:784px;width:284px;height:24px;background:#4a4a4a;border-bottom:1px solid #2a2a2a;border-radius:2px 2px 0 0"></div>
<div class="t" style="left:1619px;top:788px;font-size:14px;color:#e6e6e6;line-height:16px;">Name</div>
<div style="position:absolute;left:1611px;top:885px;width:284px;height:47px;background:#404040;border-top:1px solid #2a2a2a"></div>
<div class="t" style="left:1712px;top:840px;font-size:14px;color:#e6e6e6;line-height:16px;">No footprints</div>
<div style="position:absolute;left:1711px;top:892px;width:93px;height:33px;background:#4d4d4d;border:1px solid #2a2a2a;border-radius:4px;text-align:center;font-size:14px;line-height:31px;color:#f0f0f0">Add</div>
<div style="position:absolute;left:1810px;top:892px;width:37px;height:33px;background:#424242;border:1px solid #383838;border-radius:4px"></div>
<div style="position:absolute;left:1853px;top:892px;width:38px;height:33px;background:#424242;border:1px solid #383838;border-radius:4px"></div>
<svg class="sv" style="left:1810px;top:892px" width="81" height="33"><path d="M10.5 22.5 L12 18 L21 9 L24 12 L15 21 Z" fill="#8a8a8a"/><path d="M56 10 H66 M59 10 V8.5 H63 V10 M57 12 H65 V23 H57 Z" stroke="#8a8a8a" stroke-width="1.5" fill="none"/><path d="M59.5 14 V21 M61 14 V21 M62.5 14 V21" stroke="#8a8a8a" stroke-width="1"/></svg>
<svg class="sv" style="left:1609px;top:957px" width="8" height="8"><path d="M1 7 L7 7 L7 1 Z" fill="#e8e8e8"/></svg>
<div class="t" style="left:1621px;top:952px;font-size:14px;font-weight:bold;color:#f6f6f6;line-height:16px">Models</div>
<div style="position:absolute;left:1610px;top:977px;width:286px;height:60px;background:#3a3a3a;border:1px solid #2a2a2a;border-radius:3px"></div>
<div style="position:absolute;left:1611px;top:978px;width:284px;height:24px;background:#4a4a4a;border-bottom:1px solid #2a2a2a"></div>
<div class="t" style="left:1619px;top:982px;font-size:14px;color:#e6e6e6;line-height:16px;">Name</div>
<div style="position:absolute;left:1753px;top:981px;width:1px;height:17px;background:#2a2a2a"></div>
<div class="t" style="left:1761px;top:982px;font-size:14px;color:#e6e6e6;line-height:16px;">Type</div>
<div style="position:absolute;left:1600px;top:1026px;width:300px;height:20px;background:#404040"></div>
<div class="t" style="left:1610px;top:1031px;font-size:13.5px;color:#e6e6e6;line-height:16px;">1 object is selected</div>
<div style="position:absolute;left:1908px;top:806px;width:11px;height:72px;background:#2f3440;border:1px solid #444a58;border-radius:4px 0 0 4px"></div>
<svg class="sv" style="left:1910px;top:810px" width="9" height="66"><rect x="1" y="2" width="6" height="1" fill="#4a5060"/><rect x="1" y="5" width="6" height="1" fill="#4a5060"/><rect x="1" y="8" width="6" height="1" fill="#4a5060"/><rect x="1" y="11" width="6" height="1" fill="#4a5060"/><rect x="1" y="14" width="6" height="1" fill="#4a5060"/><rect x="1" y="17" width="6" height="1" fill="#4a5060"/><rect x="1" y="20" width="6" height="1" fill="#4a5060"/><rect x="1" y="23" width="6" height="1" fill="#4a5060"/><rect x="1" y="26" width="6" height="1" fill="#4a5060"/><rect x="1" y="29" width="6" height="1" fill="#4a5060"/><rect x="1" y="32" width="6" height="1" fill="#c9c040"/><rect x="1" y="35" width="6" height="1" fill="#c9c040"/><rect x="1" y="38" width="6" height="1" fill="#c9c040"/><rect x="1" y="41" width="6" height="1" fill="#c9c040"/><rect x="1" y="44" width="6" height="1" fill="#50c0a0"/><rect x="1" y="47" width="6" height="1" fill="#50c0a0"/><rect x="1" y="50" width="6" height="1" fill="#50c0a0"/><rect x="1" y="53" width="6" height="1" fill="#50c0a0"/><rect x="1" y="56" width="6" height="1" fill="#50c0a0"/><rect x="1" y="59" width="6" height="1" fill="#50c0a0"/></svg>
<div style="position:absolute;left:0px;top:1048px;width:1919px;height:31px;background:#404040"></div>
<div style="position:absolute;left:0px;top:1046px;width:1919px;height:2px;background:#383838"></div>
<div style="position:absolute;left:0px;top:1078px;width:1919px;height:1px;background:#1c1c1c"></div>
<div style="position:absolute;left:0px;top:1047px;width:1919px;height:1px;background:#333"></div>
<div class="t" style="left:6px;top:1057px;font-size:13.6px;color:#e6e6e6;line-height:16px">X:-2600mil Y:0mil</div>
<div class="t" style="left:130px;top:1057px;font-size:13.6px;color:#e6e6e6;line-height:16px">Grid:100mil</div>
<div style="position:absolute;left:487px;top:1050px;width:1px;height:28px;background:#2c2c2c"></div>
<div class="t" style="left:493px;top:1057px;font-size:13.6px;color:#e6e6e6;line-height:16px">Hit Spacebar to change mode</div>
<div style="position:absolute;left:973px;top:1050px;width:1px;height:28px;background:#2c2c2c"></div>
<div class="t" style="left:980px;top:1057px;font-size:13.6px;color:#e6e6e6;line-height:16px">dX:0mil dY:0mil</div>
<div style="position:absolute;left:636px;top:1077px;width:61px;height:2px;background:#1a9aa8"></div>
<div style="position:absolute;left:1866px;top:1054px;width:50px;height:22px;background:#4a4a4a;border:1px solid #2a2a2a;border-radius:3px;font-size:14px;line-height:20px;text-align:center;color:#f0f0f0">Panels</div>
</body></html>
